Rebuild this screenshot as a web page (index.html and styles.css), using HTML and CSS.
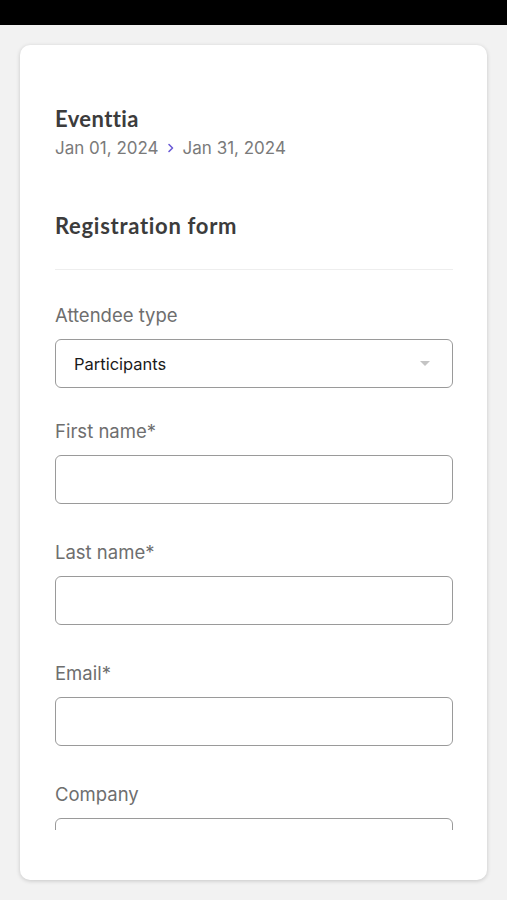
FILE: index.html
```html
<!DOCTYPE html>
<html lang="en">
<head>
  <meta charset="UTF-8" />
  <meta name="viewport" content="width=device-width, initial-scale=1.0"/>
  <title>Eventtia - Registration form</title>
  <link rel="stylesheet" href="styles.css">
</head>
<body>
  <div class="status-bar"></div>

  <div class="page">
    <div class="card">
      <div class="card-scroll">
        <div class="event">
          <h1>Eventtia</h1>
          <div class="dates">
            <span>Jan 01, 2024</span>
            <svg class="chevron" width="8" height="10" viewBox="0 0 8 10">
              <path d="M2 1.5 L5.5 5 L2 8.5" fill="none" stroke="#6b5bd6" stroke-width="1.6" stroke-linecap="round" stroke-linejoin="round"/>
            </svg>
            <span>Jan 31, 2024</span>
          </div>
        </div>

        <h2>Registration form</h2>

        <form class="form">
          <div class="field field-select">
            <label for="attendeeType">Attendee type</label>
            <div class="select">
              <span>Participants</span>
              <svg class="caret" width="10" height="6" viewBox="0 0 10 6">
                <path d="M0 0 L10 0 L5 5 Z" fill="#c4c4c4"/>
              </svg>
            </div>
          </div>

          <div class="field">
            <label for="firstName">First name*</label>
            <input type="text" id="firstName" />
          </div>

          <div class="field">
            <label for="lastName">Last name*</label>
            <input type="text" id="lastName" />
          </div>

          <div class="field">
            <label for="email">Email*</label>
            <input type="email" id="email" />
          </div>

          <div class="field">
            <label for="company">Company</label>
            <input type="text" id="company" />
          </div>
        </form>
      </div>
    </div>
  </div>
</body>
</html>
```

FILE: styles.css
```css
body {
  margin: 0;
  background: #f2f2f2;
  font-family: Inter, 'Liberation Sans', sans-serif;
}

.status-bar {
  height: 25px;
  background: #000;
}

.page {
  padding: 20px 20px 20px 20px;
}

.card {
  background: #fff;
  border-radius: 10px;
  box-shadow: 0 1px 4px rgba(0,0,0,0.18);
  padding: 0 34px 50px 35px;
  height: 835px;
  box-sizing: border-box;
}

.card-scroll {
  height: 785px;
  overflow: hidden;
}

.event {
  padding-top: 61px;
}

h1 {
  font-family: Lato, 'Noto Sans', sans-serif;
  font-size: 22px;
  font-weight: 700;
  letter-spacing: 0.4px;
  color: #3c3c3c;
  margin: 0;
  line-height: 26px;
}

.dates {
  display: flex;
  align-items: center;
  gap: 8px;
  margin-top: 6px;
  font-size: 17px;
  color: #7a7a7a;
  line-height: 20px;
}

h2 {
  font-family: Lato, 'Noto Sans', sans-serif;
  font-size: 22px;
  font-weight: 700;
  letter-spacing: 0.7px;
  color: #3c3c3c;
  margin: 55px 0 0;
  line-height: 26px;
  padding-bottom: 30px;
  border-bottom: 1px solid #eeeeee;
}

.form {
  padding-top: 34px;
}

.field {
  margin-bottom: 37px;
}

.field-select {
  margin-bottom: 32px;
}

.field label {
  display: block;
  font-size: 18.5px;
  color: #6e6e6e;
  line-height: 22px;
  margin-bottom: 13px;
}

.select,
.field input {
  display: flex;
  align-items: center;
  justify-content: space-between;
  box-sizing: border-box;
  width: 100%;
  height: 49px;
  border: 1px solid #9a9a9a;
  border-radius: 6px;
  background: #fff;
  margin: 0;
}

.select {
  padding: 0 22px 0 18px;
  font-size: 16.5px;
  color: #1a1a1a;
}
```
